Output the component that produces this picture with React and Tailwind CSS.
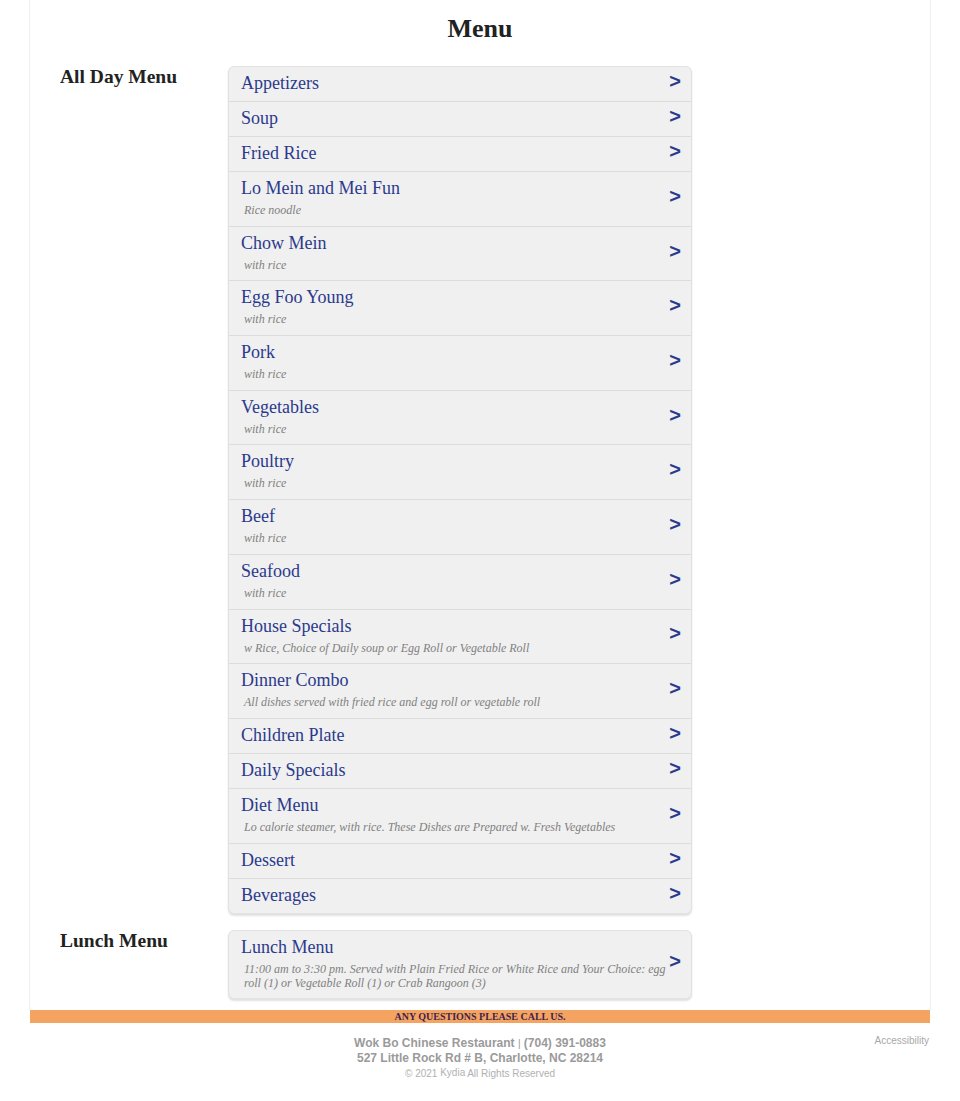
import React from "react";

const allDay = [
  { name: "Appetizers" },
  { name: "Soup" },
  { name: "Fried Rice" },
  { name: "Lo Mein and Mei Fun", note: "Rice noodle" },
  { name: "Chow Mein", note: "with rice" },
  { name: "Egg Foo Young", note: "with rice" },
  { name: "Pork", note: "with rice" },
  { name: "Vegetables", note: "with rice" },
  { name: "Poultry", note: "with rice" },
  { name: "Beef", note: "with rice" },
  { name: "Seafood", note: "with rice" },
  { name: "House Specials", note: "w Rice, Choice of Daily soup or Egg Roll or Vegetable Roll" },
  { name: "Dinner Combo", note: "All dishes served with fried rice and egg roll or vegetable roll" },
  { name: "Children Plate" },
  { name: "Daily Specials" },
  { name: "Diet Menu", note: "Lo calorie steamer, with rice. These Dishes are Prepared w. Fresh Vegetables" },
  { name: "Dessert" },
  { name: "Beverages" },
];

const lunch = [
  {
    name: "Lunch Menu",
    note: "11:00 am to 3:30 pm. Served with Plain Fried Rice or White Rice and Your Choice: egg roll (1) or Vegetable Roll (1) or Crab Rangoon (3)",
  },
];

const serif = { fontFamily: '"Liberation Serif", "Times New Roman", serif' };
const sans = { fontFamily: '"Liberation Sans", Arial, sans-serif' };

const MenuRow = ({ item, last }) => (
  <a
    href="#"
    className={`flex items-center pl-[12px] pr-[10px] pt-[5px] pb-[7px] ${last ? "" : "border-b border-[#dcdcdc]"}`}
  >
    <div className="flex-1 min-w-0">
      <div className="text-[18px] leading-[22px] text-[#2b3a8c]" style={serif}>
        {item.name}
      </div>
      {item.note && (
        <div className="text-[12px] leading-[14px] italic text-[#808080] pl-[3px] mt-[4px] mb-[1.7px]" style={serif}>
          {item.note}
        </div>
      )}
    </div>
    <span className="text-[20px] font-bold text-[#2b3a8c] leading-[20px] relative -top-[2px]" style={sans}>
      &gt;
    </span>
  </a>
);

const Section = ({ title, items }) => (
  <div className="flex">
    <div className="w-[198px] pl-[30px] shrink-0">
      <h2 className="text-[19.5px] leading-[22px] font-bold text-[#222]" style={serif}>
        {title}
      </h2>
    </div>
    <div className="w-[464px] bg-[#f0f0f0] border border-[#e2e2e2] rounded-[6px] shadow-[0_2px_2px_rgba(0,0,0,0.12)] overflow-hidden">
      {items.map((item, i) => (
        <MenuRow key={item.name} item={item} last={i === items.length - 1} />
      ))}
    </div>
  </div>
);

export default function App() {
  return (
    <div className="bg-white min-h-screen">
      <div className="w-[902px] ml-[29px] border-x border-[#eeeeee] pb-[11px]">
        <h1 className="text-center text-[26px] leading-[30px] font-bold text-[#222] pt-[14px]" style={serif}>
          Menu
        </h1>
        <div className="mt-[22px] flex flex-col gap-[16px]">
          <Section title="All Day Menu" items={allDay} />
          <Section title="Lunch Menu" items={lunch} />
        </div>
      </div>
      <div className="w-[900px] ml-[30px] h-[13px] bg-[#f4a460] flex items-center justify-center">
        <span className="text-[10px] leading-[13px] font-bold text-[#3e1f4f]" style={serif}>
          ANY QUESTIONS PLEASE CALL US.
        </span>
      </div>
      <div className="w-[900px] ml-[30px] relative pt-[13px]" style={sans}>
        <div className="text-center text-[12px] leading-[14px] font-bold text-[#9a9a9a]">
          Wok Bo Chinese Restaurant <span className="font-normal text-[10px]">|</span> (704) 391-0883
        </div>
        <div className="text-center text-[12px] leading-[14px] font-bold text-[#9a9a9a]">
          527 Little Rock Rd # B, Charlotte, NC 28214
        </div>
        <div className="text-center text-[10px] leading-[14px] text-[#b0b0b0] mt-[2px]">
          © 2021 <sup className="text-[10px] relative -top-[1px] mr-[2px]">Kydia</sup>All Rights Reserved
        </div>
        <a href="#" className="absolute right-[1px] top-[12px] text-[10px] leading-[12px] text-[#a8a8a8]">
          Accessibility
        </a>
      </div>
    </div>
  );
}
